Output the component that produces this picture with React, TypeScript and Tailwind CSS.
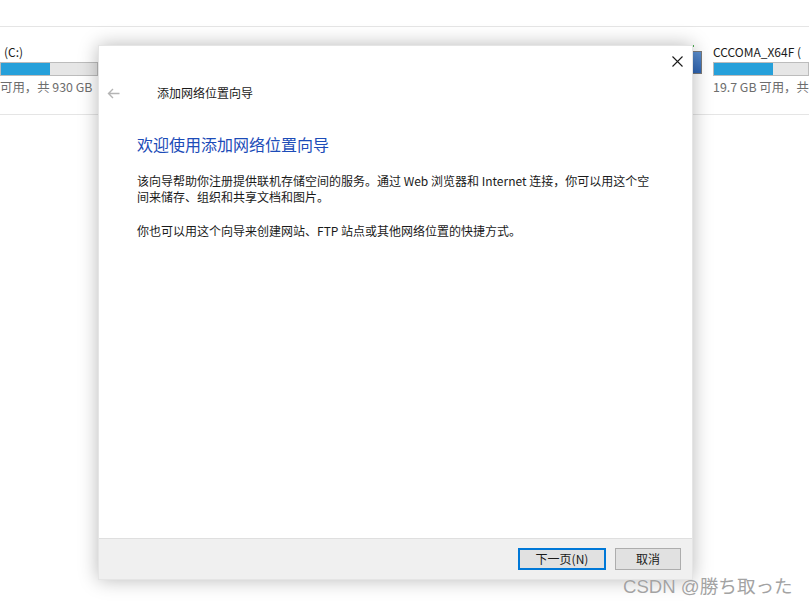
const FONT = "font-['Segoe_UI','Noto_Sans_CJK_SC',sans-serif]";

function DriveBar({ fill }: { fill: number }) {
  return (
    <div className="h-[14px] w-full border border-[#bcbcbc] bg-[#e6e6e6]">
      <div className="h-full bg-[#26a0da]" style={{ width: fill }} />
    </div>
  );
}

function BackArrow() {
  return (
    <svg width="13" height="11" viewBox="0 0 13 11" fill="none" stroke="#b4b4b4" strokeWidth="1.4">
      <path d="M12.5 5.5H1.5M6 1L1.5 5.5L6 10" />
    </svg>
  );
}

function CloseIcon() {
  return (
    <svg width="11" height="11" viewBox="0 0 11 11" stroke="#1a1a1a" strokeWidth="1.1">
      <path d="M0.5 0.5L10.5 10.5M10.5 0.5L0.5 10.5" />
    </svg>
  );
}

export default function App() {
  return (
    <div className={`relative h-[606px] w-[809px] overflow-hidden bg-white text-[#1a1a1a] ${FONT}`}>
      {/* explorer behind the wizard */}
      <div className="h-[27px] border-b border-[#e5e5e5]" />
      <div className="flex h-[88px] items-start border-b border-[#e5e5e5]">
        <div className="w-[98px] pt-[16px]">
          <div className="h-[18px] pl-[4px] text-[12px] leading-[18px] whitespace-nowrap">(C:)</div>
          <div className="mt-[1px]">
            <DriveBar fill={49} />
          </div>
          <div className="mt-[2px] h-[18px] text-[12.4px] leading-[18px] whitespace-nowrap text-[#6d6d6d]">
            可用，共 930 GB
          </div>
        </div>
        <div className="ml-auto mt-[24px] flex h-[23px] w-[12px] items-stretch">
          <div className="relative w-full border border-[#7a7a7a] bg-gradient-to-b from-[#5b8fd0] to-[#2f65b3]">
            <span className="absolute -top-[7px] left-[1px] h-[2px] w-[2px] bg-[#4caf50]" />
          </div>
        </div>
        <div className="ml-[11px] w-[96px] pt-[16px]">
          <div className="h-[18px] text-[12px] leading-[18px] whitespace-nowrap">CCCOMA_X64F (</div>
          <div className="mt-[1px]">
            <DriveBar fill={59} />
          </div>
          <div className="mt-[2px] h-[18px] text-[12.4px] leading-[18px] whitespace-nowrap text-[#6d6d6d]">
            19.7 GB 可用，共
          </div>
        </div>
      </div>

      {/* wizard window */}
      <div className="absolute left-[98px] top-[45px] flex h-[535px] w-[595px] flex-col border border-black/10 bg-white shadow-[0_0_18px_rgba(0,0,0,0.28)]">
        <button className="absolute left-[573px] top-[10px]">
          <CloseIcon />
        </button>

        <div className="mt-[35px] flex h-[24px] items-center">
          <div className="ml-[8px] w-[50px]">
            <BackArrow />
          </div>
          <div className="text-[12px]">添加网络位置向导</div>
        </div>

        <div className="ml-[38px] mt-[28px] text-[16px] leading-[22px] text-[#1c4cb8]">
          欢迎使用添加网络位置向导
        </div>

        <div className="ml-[38px] mt-[18px] w-[520px] text-[12px] leading-[16px]">
          <p>
            该向导帮助你注册提供联机存储空间的服务。通过 Web 浏览器和 Internet 连接，你可以用这个空间来储存、组织和共享文档和图片。
          </p>
          <p className="mt-[18px]">你也可以用这个向导来创建网站、FTP 站点或其他网络位置的快捷方式。</p>
        </div>

        <div className="mt-auto flex h-[41px] items-start justify-end gap-[9px] border-t border-[#dfdfdf] bg-[#f0f0f0] pr-[11px] pt-[9px]">
          <button className="h-[22px] w-[88px] border-2 border-[#0078d7] bg-[#e1e1e1] text-[12px] leading-none">
            下一页(N)
          </button>
          <button className="h-[22px] w-[66px] border border-[#adadad] bg-[#e1e1e1] text-[12px] leading-none">
            取消
          </button>
        </div>
      </div>

      {/* watermark */}
      <div className="absolute left-[623px] top-[575px] font-['Liberation_Sans','Noto_Sans_CJK_JP',sans-serif] text-[18.6px] leading-[24px] text-[#a3a3a3] [text-shadow:0_0_1px_#ffffff]">
        CSDN @勝ち取った
      </div>
    </div>
  );
}
